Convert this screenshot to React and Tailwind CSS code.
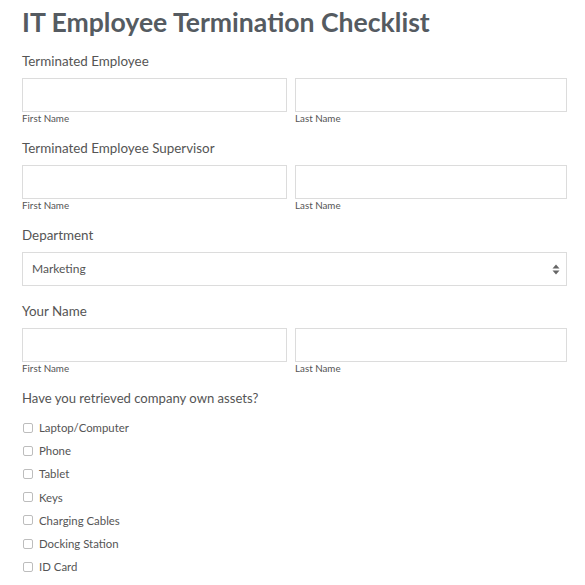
import React from "react";

function NameRow() {
  return (
    <div className="flex gap-[8px]">
      <div className="w-[265px]">
        <div className="h-[34px] border border-[#dcdcdc] bg-white"></div>
        <div className="text-[9.8px] leading-[12px] text-[#555]">First Name</div>
      </div>
      <div className="flex-1">
        <div className="h-[34px] border border-[#dcdcdc] bg-white"></div>
        <div className="text-[9.8px] leading-[12px] text-[#555]">Last Name</div>
      </div>
    </div>
  );
}

function Label({ children, className = "" }) {
  return (
    <div className={"text-[13.4px] leading-[20px] text-[#555] pt-[1px] mb-[7px] " + className}>{children}</div>
  );
}

const items = [
  "Laptop/Computer",
  "Phone",
  "Tablet",
  "Keys",
  "Charging Cables",
  "Docking Station",
  "ID Card",
  "Other",
];

export default function App() {
  return (
    <div className="w-[585px] h-[585px] overflow-hidden bg-white pl-[22px] pr-[18px] pt-[5px]" style={{ fontFamily: "Lato, 'Open Sans', sans-serif" }}>
      <h1 className="text-[26.6px] leading-[34px] font-bold text-[#555b61] mb-[11px]">IT Employee Termination Checklist</h1>

      <Label>Terminated Employee</Label>
      <NameRow />

      <Label className="mt-[13px]">Terminated Employee Supervisor</Label>
      <NameRow />

      <Label className="mt-[13px]">Department</Label>
      <div className="h-[34px] border border-[#dcdcdc] bg-white flex items-center justify-between pl-[9px] pr-[6px]">
        <span className="text-[12px] text-[#555]">Marketing</span>
        <svg width="8" height="11" viewBox="0 0 8 11">
          <path d="M4 0.5 L7.5 4.5 L0.5 4.5 Z" fill="#666" />
          <path d="M4 10.5 L7.5 6.5 L0.5 6.5 Z" fill="#666" />
        </svg>
      </div>

      <Label className="mt-[14px]">Your Name</Label>
      <NameRow />

      <div className="text-[13.1px] leading-[20px] text-[#555] mt-[14px] mb-[8px]">Have you retrieved company own assets?</div>
      <div className="flex flex-col">
        {items.map((t) => (
          <div key={t} className="flex items-center h-[23.2px] gap-[6px]">
            <span className="ml-[1px] w-[10px] h-[10px] border border-[#bdbdbd] rounded-[2px] bg-white"></span>
            <span className="text-[11.4px] text-[#555]">{t}</span>
          </div>
        ))}
      </div>
    </div>
  );
}
